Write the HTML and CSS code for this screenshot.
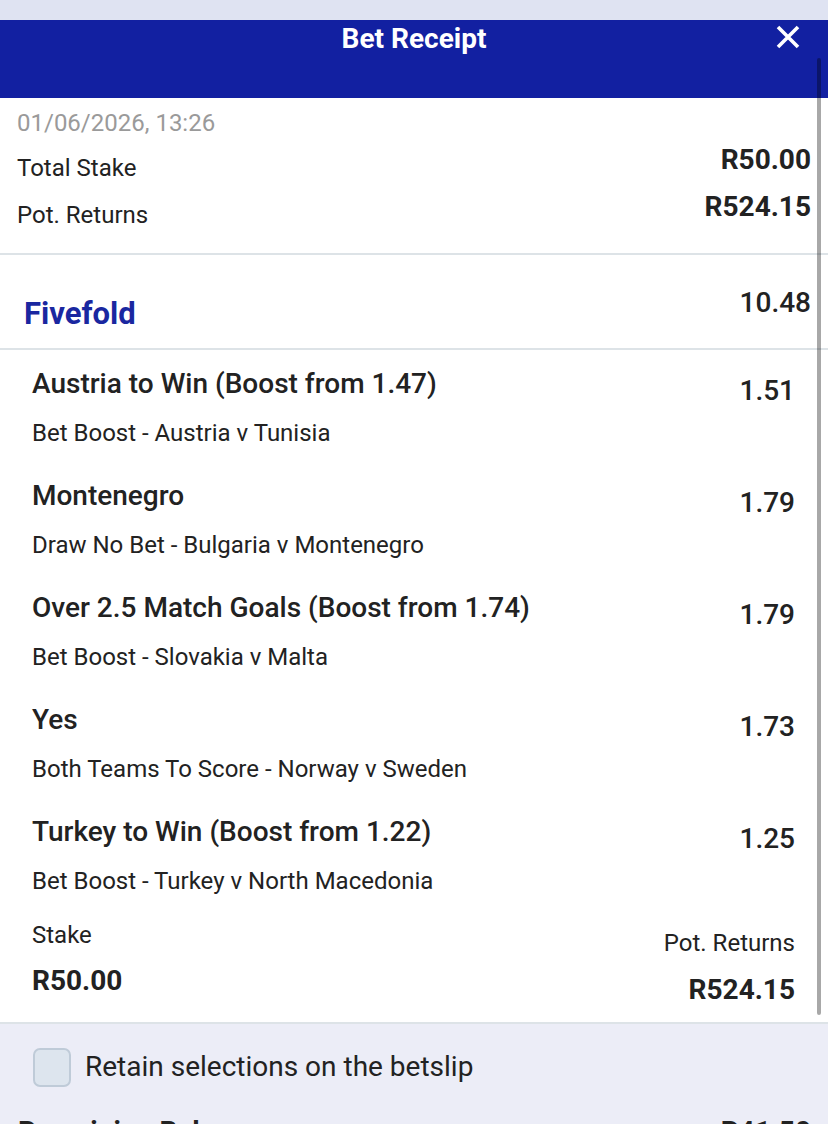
FILE: index.html
```html
<html>

<head>
    <meta name="viewport" content="width=device-width, initial-scale=1">
    <title>Bet Receipt</title>
    <link rel="stylesheet" href="styles.css">
</head>

<body>
    <div class="topStrip"></div>
    <div class="header">
        <h1>Bet Receipt</h1>
        <button class="close" aria-label="Close">
            <svg width="26" height="24" viewBox="0 0 26 24">
                <path d="M3 2 L23 22 M23 2 L3 22" stroke="#fff" stroke-width="3.6" stroke-linecap="butt" />
            </svg>
        </button>
    </div>

    <div class="receipt">
        <div class="summary">
            <div class="date">01/06/2026, 13:26</div>
            <div class="sumRow">
                <span class="label">Total Stake</span>
                <span class="amount">R50.00</span>
            </div>
            <div class="sumRow second">
                <span class="label">Pot. Returns</span>
                <span class="amount">R524.15</span>
            </div>
        </div>

        <div class="betType">
            <span class="typeName">Fivefold</span>
            <span class="typeOdds">10.48</span>
        </div>

        <div class="selections">
            <div class="selection">
                <div class="selTop">
                    <span class="selName">Austria to Win (Boost from 1.47)</span>
                    <span class="selOdds">1.51</span>
                </div>
                <div class="selMarket">Bet Boost - Austria v Tunisia</div>
            </div>
            <div class="selection">
                <div class="selTop">
                    <span class="selName">Montenegro</span>
                    <span class="selOdds">1.79</span>
                </div>
                <div class="selMarket">Draw No Bet - Bulgaria v Montenegro</div>
            </div>
            <div class="selection">
                <div class="selTop">
                    <span class="selName">Over 2.5 Match Goals (Boost from 1.74)</span>
                    <span class="selOdds">1.79</span>
                </div>
                <div class="selMarket">Bet Boost - Slovakia v Malta</div>
            </div>
            <div class="selection">
                <div class="selTop">
                    <span class="selName">Yes</span>
                    <span class="selOdds">1.73</span>
                </div>
                <div class="selMarket">Both Teams To Score - Norway v Sweden</div>
            </div>
            <div class="selection">
                <div class="selTop">
                    <span class="selName">Turkey to Win (Boost from 1.22)</span>
                    <span class="selOdds">1.25</span>
                </div>
                <div class="selMarket">Bet Boost - Turkey v North Macedonia</div>
            </div>

            <div class="stakeRow">
                <div class="stakeCol">
                    <span class="stakeLabel">Stake</span>
                    <span class="stakeValue">R50.00</span>
                </div>
                <div class="stakeCol right">
                    <span class="stakeLabel">Pot. Returns</span>
                    <span class="stakeValue">R524.15</span>
                </div>
            </div>
        </div>
    </div>

    <div class="footer">
        <label class="retain">
            <input type="checkbox" id="retain">
            <span class="box"></span>
            <span>Retain selections on the betslip</span>
        </label>
        <div class="balance">
            <span>Remaining Balance</span>
            <span class="balanceValue">R41.50</span>
        </div>
    </div>

    <!-- overlay scrollbar of the receipt panel -->
    <div class="scrollbar"></div>
</body>

</html>
```

FILE: styles.css
```css
body {
    margin: 0;
    font-family: Roboto, "Liberation Sans", sans-serif;
    color: #222;
    background-color: #ecedf7;
    overflow: hidden;
    height: 1124px;
    position: relative;
}

.topStrip {
    height: 20px;
    background-color: #dfe3f2;
}

.header {
    height: 78px;
    background-color: #1220a1;
    position: relative;
}

.header h1 {
    margin: 0;
    text-align: center;
    color: #fff;
    font-size: 28px;
    font-weight: 700;
    line-height: 38px;
}

.close {
    position: absolute;
    top: 5px;
    right: 27px;
    width: 26px;
    height: 24px;
    padding: 0;
    border: none;
    background: none;
}

.close svg {
    display: block;
}

.receipt {
    background-color: #fff;
}

/* totals block */
.summary {
    padding: 10px 17px 23px 17px;
    border-bottom: 2px solid #dde3e7;
}

.date {
    color: #9a9a9a;
    font-size: 24px;
    line-height: 30px;
}

.sumRow {
    display: flex;
    justify-content: space-between;
    align-items: flex-start;
    margin-top: 7px;
}

.sumRow.second {
    margin-top: 9px;
}

.sumRow .label {
    font-size: 24px;
    line-height: 30px;
    margin-top: 8px;
}

.sumRow .amount {
    font-size: 28px;
    font-weight: 700;
    line-height: 30px;
}

.betType {
    display: flex;
    justify-content: space-between;
    align-items: flex-start;
    padding: 33px 17px 17px 24px;
    border-bottom: 2px solid #dde3e7;
}

.typeName {
    color: #1a27a0;
    font-size: 31px;
    font-weight: 700;
    line-height: 34px;
    margin-top: 9px;
}

.typeOdds {
    font-size: 28px;
    font-weight: 500;
    line-height: 30px;
}

/* legs of the multiple */
.selections {
    padding: 18px 33px 16px 32px;
    border-bottom: 2px solid #dde3e7;
}

.selection {
    margin-bottom: 33px;
}

.selTop {
    display: flex;
    justify-content: space-between;
    align-items: flex-start;
    height: 32px;
}

.selName {
    font-size: 28px;
    font-weight: 500;
    line-height: 32px;
}

.selOdds {
    font-size: 28px;
    font-weight: 500;
    line-height: 30px;
    margin-top: 8px;
}

.selMarket {
    margin-top: 19px;
    font-size: 24px;
    line-height: 28px;
}

.stakeRow {
    display: flex;
    justify-content: space-between;
    margin-top: -7px;
}

.stakeCol {
    display: flex;
    flex-direction: column;
    gap: 16px;
}

.stakeCol.right {
    align-items: flex-end;
    margin-top: 8px;
}

.stakeLabel {
    font-size: 24px;
    line-height: 28px;
}

.stakeValue {
    font-size: 28px;
    font-weight: 700;
    line-height: 32px;
}

.stakeCol.right .stakeValue {
    margin-top: 1px;
}

/* bottom bar */
.footer {
    padding: 23px 17px 0 33px;
}

.retain {
    display: flex;
    align-items: center;
    gap: 14px;
    font-size: 28px;
    line-height: 40px;
}

.retain input {
    display: none;
}

.retain .box {
    width: 34px;
    height: 35px;
    border: 2px solid #bfcbd8;
    border-radius: 7px;
    background-color: #dde5ee;
}

.balance {
    display: flex;
    justify-content: space-between;
    margin: 29px 0 0 -15px;
    font-size: 28px;
    font-weight: 700;
    line-height: 32px;
}

.scrollbar {
    position: absolute;
    top: 58px;
    left: 817px;
    width: 4px;
    height: 957px;
    border-radius: 2px;
    background-color: rgba(0, 0, 0, 0.34);
}
```
